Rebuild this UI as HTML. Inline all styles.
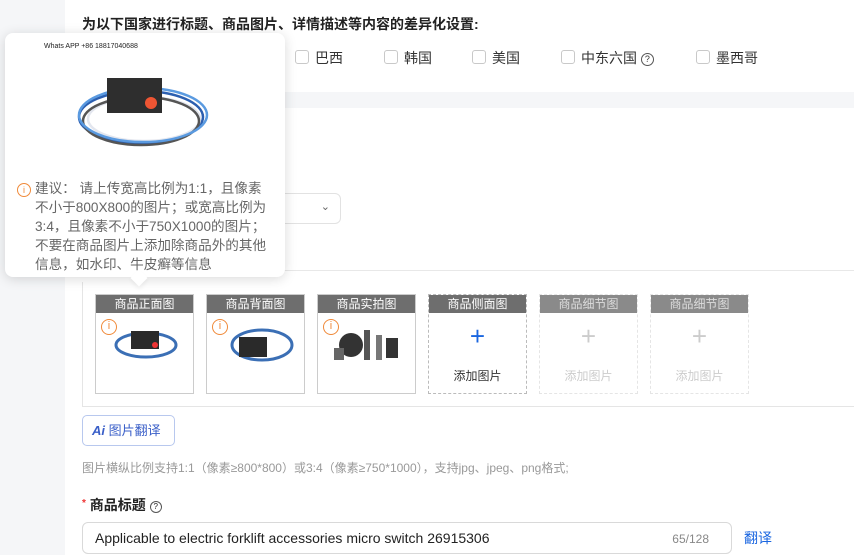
<!DOCTYPE html><html><head><meta charset="utf-8"><style>
*{margin:0;padding:0;box-sizing:border-box}
body{width:854px;height:555px;overflow:hidden;background:#f5f6f8;font-family:"Liberation Sans","Noto Sans CJK SC",sans-serif;position:relative;color:#333}
.abs{position:absolute}
.w{background:#fff}
.cb{position:absolute;width:14px;height:14px;border:1px solid #c9c9c9;border-radius:3px;background:#fff}
.lbl{position:absolute;font-size:14px;color:#333}
.card{position:absolute;top:294px;width:99px;height:100px;border:1px solid #ccc;background:#fff}
.card .h{height:18px;background:#6e6e6e;color:#fff;font-size:12px;text-align:center;line-height:18px}
.card.d{border:1px dashed #bbb}
.card.e{border:1px dashed #e5e5e5}
.card.e .h{background:#8a8a8a;color:#ddd}
.plus{position:absolute;left:0;right:0;top:28px;text-align:center;font-size:26px;line-height:26px;color:#1a66e0}
.add{position:absolute;left:0;right:0;top:72px;text-align:center;font-size:12px;color:#333}
.e .plus{color:#ccc}.e .add{color:#ccc}
.info{position:absolute;left:5px;top:24px;width:16px;height:16px;border:1.5px solid #f08a3a;border-radius:50%;color:#f08a3a;font-size:11px;text-align:center;line-height:13px;background:#fff}
</style></head><body>
<div class="abs w" style="left:65px;top:0;width:789px;height:92px"></div>
<div class="abs w" style="left:65px;top:108px;width:789px;height:447px"></div>
<div class="abs" style="left:65px;top:270px;width:789px;height:1px;background:#e8e8e8"></div>
<div class="abs" style="left:82px;top:14px;font-size:14px;font-weight:bold;color:#222">为以下国家进行标题、商品图片、详情描述等内容的差异化设置:</div>
<div class="cb" style="left:295px;top:50px"></div><div class="lbl" style="left:315px;top:48px">巴西</div>
<div class="cb" style="left:384px;top:50px"></div><div class="lbl" style="left:404px;top:48px">韩国</div>
<div class="cb" style="left:472px;top:50px"></div><div class="lbl" style="left:492px;top:48px">美国</div>
<div class="cb" style="left:561px;top:50px"></div><div class="lbl" style="left:581px;top:48px">中东六国 <span style="display:inline-block;width:13px;height:13px;border:1px solid #555;border-radius:50%;font-size:9px;line-height:11px;text-align:center;vertical-align:1px">?</span></div>
<div class="cb" style="left:696px;top:50px"></div><div class="lbl" style="left:716px;top:48px">墨西哥</div>
<div class="abs" style="left:200px;top:193px;width:141px;height:31px;border:1px solid #e2e2e2;border-radius:6px;background:#fff"><span style="position:absolute;right:10px;top:6px;font-size:11px;color:#666">&#8964;</span></div>
<div class="abs" style="left:82px;top:282px;width:780px;height:125px;border:1px solid #e5e5e5;border-top:none;border-right:none"></div>
<div class="card" style="left:95px"><div class="h">商品正面图</div><div class="info">i</div>
<svg class="abs" style="left:15px;top:28px" width="70" height="40"><ellipse cx="35" cy="22" rx="30" ry="12" fill="none" stroke="#3b6fb5" stroke-width="3"/><rect x="20" y="8" width="28" height="18" fill="#2a2a2a"/><circle cx="44" cy="22" r="3" fill="#e33"/></svg></div>
<div class="card" style="left:206px"><div class="h">商品背面图</div><div class="info">i</div>
<svg class="abs" style="left:20px;top:28px" width="70" height="45"><ellipse cx="35" cy="22" rx="30" ry="15" fill="none" stroke="#3b6fb5" stroke-width="3"/><rect x="12" y="14" width="28" height="20" fill="#2a2a2a"/></svg></div>
<div class="card" style="left:317px"><div class="h">商品实拍图</div><div class="info">i</div>
<svg class="abs" style="left:8px;top:25px" width="85" height="45"><circle cx="25" cy="25" r="12" fill="#333"/><rect x="38" y="10" width="6" height="30" fill="#555"/><rect x="50" y="15" width="6" height="25" fill="#777"/><rect x="60" y="18" width="12" height="20" fill="#333"/><rect x="8" y="28" width="10" height="12" fill="#666"/></svg></div>
<div class="card d" style="left:428px"><div class="h">商品侧面图</div><div class="plus">+</div><div class="add">添加图片</div></div>
<div class="card e" style="left:539px"><div class="h">商品细节图</div><div class="plus">+</div><div class="add">添加图片</div></div>
<div class="card e" style="left:650px"><div class="h">商品细节图</div><div class="plus">+</div><div class="add">添加图片</div></div>
<div class="abs" style="left:82px;top:415px;width:93px;height:31px;border:1px solid #b8c8ee;border-radius:5px;background:#fff;font-size:13px;line-height:29px;padding-left:9px;color:#3a5fc8"><b style="font-style:italic">Ai</b> 图片翻译</div>
<div class="abs" style="left:82px;top:459px;font-size:12px;color:#999">图片横纵比例支持1:1（像素≥800*800）或3:4（像素≥750*1000），支持jpg、jpeg、png格式;</div>
<div class="abs" style="left:82px;top:495px;font-size:14px;font-weight:bold;color:#222"><span style="color:#e33;font-size:10px;vertical-align:4px">*</span> 商品标题 <span style="display:inline-block;width:12px;height:12px;border:1px solid #555;border-radius:50%;font-size:8px;line-height:10px;text-align:center;font-weight:normal;vertical-align:1px">?</span></div>
<div class="abs" style="left:82px;top:522px;width:650px;height:32px;border:1px solid #d9d9d9;border-radius:6px;background:#fff"><span style="position:absolute;left:12px;top:7px;font-size:14px;color:#222">Applicable to electric forklift accessories micro switch 26915306</span><span style="position:absolute;right:22px;top:9px;font-size:12px;color:#888">65/128</span></div>
<div class="abs" style="left:744px;top:528px;font-size:14px;color:#1a66e0">翻译</div>
<div class="abs" style="left:5px;top:33px;width:280px;height:244px;background:#fff;border-radius:8px;box-shadow:0 2px 12px rgba(0,0,0,.15)">
<div class="abs" style="left:39px;top:10px;font-size:7px;color:#222">Whats APP +86 18817040688</div>
<svg class="abs" style="left:64px;top:38px" width="150" height="80"><g fill="none" stroke-width="2.5"><ellipse cx="72" cy="46" rx="62" ry="26" stroke="#2c5fb0"/><ellipse cx="75" cy="48" rx="56" ry="22" stroke="#e3e6ee"/><ellipse cx="72" cy="50" rx="58" ry="24" stroke="#555"/><ellipse cx="74" cy="44" rx="64" ry="27" stroke="#5a9ae0"/></g><rect x="38" y="7" width="55" height="35" fill="#2e2e2e"/><circle cx="82" cy="32" r="6" fill="#e53"/></svg>
<div class="abs" style="left:12px;top:150px;width:14px;height:14px;border:1px solid #f08a3a;border-radius:50%;color:#f08a3a;font-size:9px;text-align:center;line-height:12px">i</div>
<div class="abs" style="left:30px;top:146px;width:250px;font-size:13.6px;line-height:19px;color:#666;white-space:nowrap">建议： 请上传宽高比例为1:1，且像素<br>不小于800X800的图片；或宽高比例为<br>3:4，且像素不小于750X1000的图片；<br>不要在商品图片上添加除商品外的其他<br>信息，如水印、牛皮癣等信息</div>
</div>
<div class="abs" style="left:133px;top:272px;width:12px;height:12px;background:#fff;transform:rotate(45deg);box-shadow:2px 2px 4px rgba(0,0,0,.06)"></div>
</body></html>
